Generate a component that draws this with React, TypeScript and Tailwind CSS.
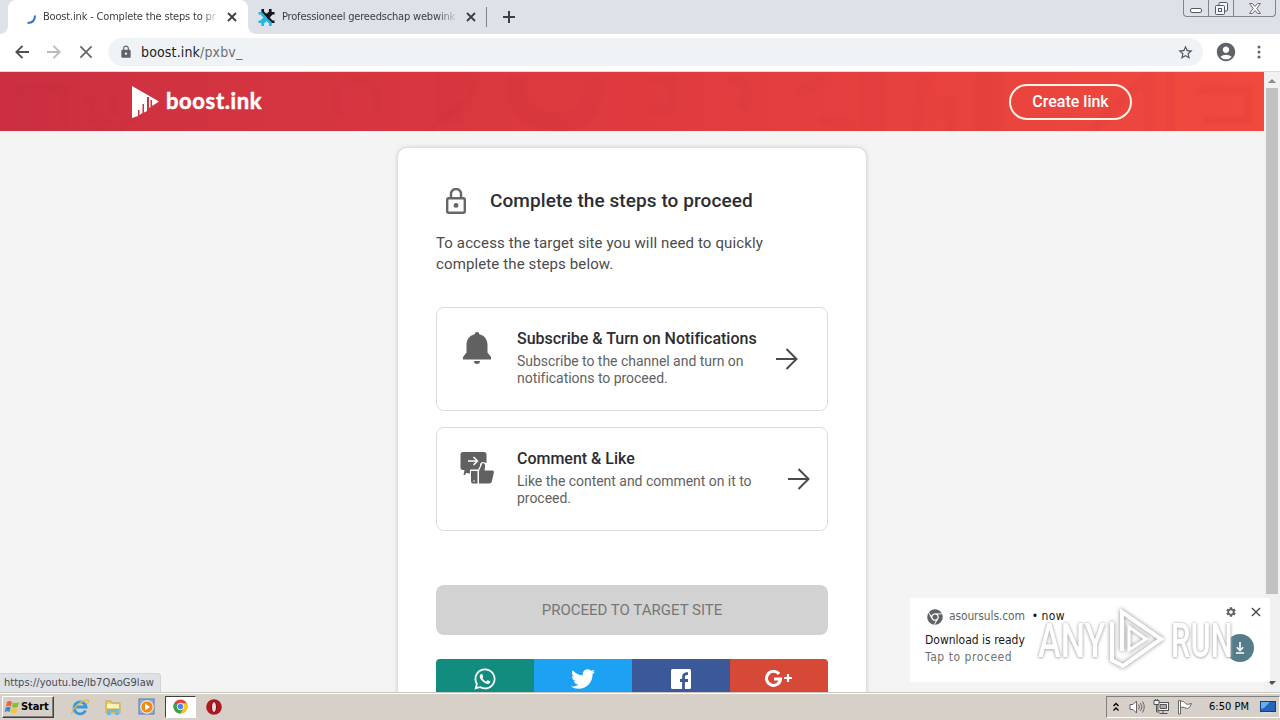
import React from "react";
import { FaChrome, FaTwitter, FaWhatsapp } from "react-icons/fa";
import { MdAccountCircle, MdLock, MdSettings, MdStarBorder } from "react-icons/md";

function Cross({ className, w = 1.8 }: { className: string; w?: number }) {
  return (
    <svg viewBox="0 0 10 10" className={className} stroke="currentColor" strokeWidth={w} fill="none">
      <path d="M1 1l8 8M9 1l-8 8" />
    </svg>
  );
}

function TabStrip() {
  return (
    <div className="flex h-[34px] shrink-0 bg-[#dee1e8] font-['DejaVu_Sans_Condensed','DejaVu_Sans',sans-serif] text-[11px] text-[#3a3d42]">
      <div className="flex w-2 items-end bg-white">
        <div className="h-full w-2 rounded-br-lg bg-[#dee1e8]" />
      </div>
      <div className="flex h-full w-[240px] items-center rounded-t-lg bg-white pl-[17px]">
        <svg viewBox="0 0 16 16" className="h-4 w-4 shrink-0" fill="none" stroke="#3b6fd0" strokeWidth="2">
          <path d="M10 4.500C10 9 7.500 12 2.500 12" transform="translate(0 2)" />
        </svg>
        <div className="ml-[2px] w-[176px] whitespace-nowrap tracking-[-0.18px] [mask-image:linear-gradient(to_right,black_90%,transparent)]">
          Boost.ink - Complete the steps to pr
        </div>
        <Cross className="ml-[8px] h-[10px] w-[10px] shrink-0" />
      </div>
      <div className="flex w-2 bg-white">
        <div className="h-full w-2 rounded-bl-lg bg-[#dee1e8]" />
      </div>
      <div className="flex h-full items-center pl-[2px]">
        <svg viewBox="0 0 18 18" className="h-[17px] w-[17px]" fill="none" strokeWidth="2.800">
          <path d="M5 0v3.500l4 3.500 4-3.500V0" stroke="#15161b" />
          <path d="M17.500 4.500h-3L10.500 9l4 4.500h3" stroke="#15161b" />
          <path d="M.5 4.500h3L7.500 9l-4 4.500h-3M5 18v-3.500L9 11l4 3.500V18" stroke="#25b5df" />
        </svg>
        <div className="ml-[7px] w-[176px] whitespace-nowrap tracking-[-0.18px] [mask-image:linear-gradient(to_right,black_88%,transparent)]">
          Professioneel gereedschap webwink
        </div>
        <Cross className="ml-[8px] h-[10px] w-[10px]" />
        <div className="ml-[10px] h-5 w-px bg-[#80848a]" />
        <svg viewBox="0 0 12 12" className="ml-[16px] h-3 w-3" stroke="#3c4043" strokeWidth="2">
          <path d="M6 0v12M0 6h12" />
        </svg>
      </div>
      <div className="mr-1 ml-auto flex h-[17px] w-[93px] rounded-b-[4px] border border-t-0 border-[#80848f]">
        <div className="flex w-[25px] items-end justify-center border-r border-[#80848f] pb-[3px]">
          <div className="h-[5px] w-3 rounded-[2px] border border-[#555962] bg-white" />
        </div>
        <div className="flex w-[25px] items-center justify-center border-r border-[#80848f]">
          <svg viewBox="0 0 13 13" className="h-[13px] w-[13px]" fill="#f4f5f7" stroke="#555962">
            <rect x="4" y=".5" width="8.500" height="8.500" rx="1" />
            <rect x=".5" y="3.500" width="9" height="9" rx="1" />
            <rect x="3.500" y="6.500" width="3" height="3" />
          </svg>
        </div>
        <div className="flex flex-1 items-center justify-center">
          <svg viewBox="0 0 12 11" className="h-[11px] w-3" fill="#fff" stroke="#686c75">
            <path d="M.5.500h3L6 3.500 8.500.500h3L7.800 5.500l3.700 5h-3L6 7.500l-2.500 3h-3l3.700-5z" />
          </svg>
        </div>
      </div>
    </div>
  );
}

function NavArrow({ className }: { className: string }) {
  return (
    <svg viewBox="0 0 14 14" className={className} fill="none" stroke="currentColor" strokeWidth="1.800">
      <path d="M14 7H1.500M7.500 .8L1.300 7l6.200 6.200" />
    </svg>
  );
}

function Toolbar() {
  return (
    <div className="flex h-[38px] shrink-0 items-center border-b border-[#dcdcdc] bg-white pb-px text-[#5f6368]">
      <NavArrow className="ml-[15px] h-[14px] w-[14px] text-[#4c5055]" />
      <NavArrow className="ml-[18px] h-[14px] w-[14px] rotate-180 text-[#b9bbbe]" />
      <Cross className="ml-[18px] h-[14px] w-[14px]" w={1.2} />
      <div className="ml-[15px] flex h-7 w-[1095px] items-center rounded-full bg-[#f0f3f6] pr-[9px] pl-[11px]">
        <MdLock className="h-[14px] w-[14px]" />
        <div className="ml-2 font-['DejaVu_Sans_Condensed','DejaVu_Sans',sans-serif] text-[14px] tracking-[0.15px] text-[#6a6e73]">
          <span className="text-[#202124]">boost.ink</span>/pxbv_
        </div>
        <MdStarBorder className="ml-auto h-[17px] w-[17px] text-[#50545a]" />
      </div>
      <MdAccountCircle className="ml-[12px] h-[22px] w-[22px]" />
      <svg viewBox="0 0 4 14" className="ml-[20px] h-[14px] w-1" fill="#5f6368">
        <circle cx="2" cy="2" r="1.500" />
        <circle cx="2" cy="7" r="1.500" />
        <circle cx="2" cy="12" r="1.500" />
      </svg>
    </div>
  );
}

function Header() {
  return (
    <div className="relative flex h-[59px] shrink-0 items-center bg-linear-to-r from-[#cb2f40] via-[#df3b3f] to-[#f0493e]">
      <svg viewBox="0 0 1264 59" className="absolute inset-0 h-full w-full blur-[1px]" fill="none" stroke="#a32435" strokeOpacity=".06">
        <path d="M15 15h55M22 15v38M43 15v38M65 15v38" strokeWidth="5" strokeOpacity=".04" />
        <path d="M86 30l6-4v14m10 0v3m16-17h-5v14h7M88 50h26m-13 0v9m34-9h-14v9" strokeWidth="4" />
        <path d="M340 42c-8-16-4-32 16-33s25 14 20 31M430 59c14-22 40-17 48-59" strokeWidth="6" />
        <path d="M436 5h36M450 5v45" strokeWidth="24" />
        <path d="M517 5c-8 25 12 43 38 45s43-16 37-43" strokeWidth="18" />
        <path d="M650 8h22v30h-22M730 12c14-10 24 5 12 25M800 23c9-12 19-6 22-19M820 48l35 5" strokeWidth="9" />
        <path d="M872 0v59M988 0v59" strokeWidth="25" />
        <path d="M924 5l-8 54M948 25l4 34" strokeWidth="10" />
        <path d="M1090 59l58-56v56M1170 0v59M1198 18h50v30h-44" strokeWidth="8" />
      </svg>
      <svg viewBox="0 0 27 32" className="relative ml-[132px] h-8 w-[27px]" fill="#fff">
        <path d="M0 0L27 15.500 20 20v-6h-1.500v7L17 22V11h-2v14l-3 1.500V18h-1.500v9L7.500 29v-5H6v6L0 32z" />
      </svg>
      <div className="relative ml-[7px] pb-[2px] font-[Lato,sans-serif] text-[22px] leading-[30px] font-bold tracking-[0.62px] text-white [-webkit-text-stroke:0.5px_#fff]">
        boost.ink
      </div>
      <div className="relative mr-[132px] ml-auto flex h-9 w-[123px] items-center justify-center rounded-full border-2 border-[#fff4e6] text-[16px] font-medium text-white">
        Create link
      </div>
    </div>
  );
}

function StepArrow() {
  return (
    <svg viewBox="0 0 22 22" className="h-[22px] w-[22px] shrink-0" fill="none" stroke="#4a4a4a" strokeWidth="2">
      <path d="M0 11h20.500M10.500 1l10 10-10 10" />
    </svg>
  );
}

function Step({ icon, title, text, textClass }: { icon: React.ReactNode; title: string; text: string; textClass: string }) {
  return (
    <div className="flex h-[104px] rounded-lg border border-[#dcdcdc] pt-[21px] pl-[20px]">
      <div className="-mt-px flex h-10 w-10 items-center justify-center">{icon}</div>
      <div className={textClass}>
        <div className="text-[16px] leading-5 font-medium tracking-[-0.01px] whitespace-nowrap text-[#2c2c32]">{title}</div>
        <div className="mt-1 text-[14px] leading-[17px] tracking-[-0.03px] text-[#626262]">{text}</div>
      </div>
      <div className="pt-[19px]">
        <StepArrow />
      </div>
    </div>
  );
}

function CommentLike() {
  return (
    <svg viewBox="0 0 34 34" className="h-[34px] w-[34px]" fill="#616161">
      <path d="M3 1h21a2.500 2.500 0 0 1 2.500 2.500V12L23 11c-2 0-3 1-3 4l-2 3.500h-8v4L6 22l-1 2H3.500l1-5H3a2.500 2.500 0 0 1-2.500-2.500v-13A2.500 2.500 0 0 1 3 1z" />
      <path d="M8 10h9M13.500 6l4 4-4 4" fill="none" stroke="#fff" strokeWidth="1.500" />
      <path d="M11 20h6.500v12.500H13A2 2 0 0 1 11 30.500zM19 20l3.500-8c2 0 3 1.500 2.500 4l-.5 3.500h7.500a1.800 1.800 0 0 1 1.800 2.200l-2 9a2.500 2.500 0 0 1-2.400 1.800H19z" />
      <circle cx="14" cy="30" r=".8" fill="#fff" />
    </svg>
  );
}

function Card() {
  return (
    <div className="mx-auto mt-4 flex h-[600px] w-[470px] shrink-0 flex-col rounded-[10px] border border-[#dedede] bg-white px-[38px] pt-[35px] shadow-[0_0_4px_#d4d4d4]">
      <div className="flex h-[36px] items-center">
        <svg viewBox="0 0 20 26" className="-mt-px ml-[10px] h-[26px] w-5" fill="none" stroke="#666" strokeWidth="2.400">
          <rect x="1.200" y="10.200" width="17.600" height="14.500" rx="1.500" />
          <path d="M5 10V6a5 5 0 0 1 10 0v4" />
          <circle cx="10" cy="17.400" r="2.400" fill="#666" stroke="none" />
        </svg>
        <div className="ml-[24px] text-[19px] font-medium tracking-[0.08px] whitespace-nowrap text-[#2c2c32]">Complete the steps to proceed</div>
      </div>
      <div className="mt-[14px] text-[15px] leading-[21px] tracking-[0.12px] text-[#4b4b4b]">
        To access the target site you will need to quickly
        <br />
        complete the steps below.
      </div>
      <div className="mt-8 flex flex-col gap-4">
        <Step
          icon={
            <svg viewBox="0 0 28 32" className="h-8 w-7" fill="#616161">
              <path d="M14 0a2.400 2.400 0 0 1 2.400 2.200C22 3.500 24.500 8 24.500 13v7.500L28 25v2.500H0V25l3.500-4.500V13C3.500 8 6 3.500 11.600 2.200A2.400 2.400 0 0 1 14 0zM11 29h6a3 3 0 0 1-6 0z" />
            </svg>
          }
          title="Subscribe & Turn on Notifications"
          text="Subscribe to the channel and turn on notifications to proceed."
          textClass="mr-[19px] ml-5 w-[240px]"
        />
        <Step icon={<CommentLike />} title="Comment & Like" text="Like the content and comment on it to proceed." textClass="mr-[16px] ml-5 w-[255px]" />
      </div>
      <div className="mt-[54px] flex h-[50px] shrink-0 items-center justify-center rounded-lg bg-[#d2d2d2] text-[15px] text-[#777]">PROCEED TO TARGET SITE</div>
      <div className="mt-6 grid h-10 shrink-0 grid-cols-4 overflow-hidden rounded-t text-white">
        <div className="flex items-center justify-center bg-[#128c7e]">
          <FaWhatsapp className="h-6 w-6" />
        </div>
        <div className="flex items-center justify-center bg-[#1da1f2]">
          <FaTwitter className="h-6 w-6" />
        </div>
        <div className="flex items-center justify-center bg-[#3b5998]">
          <svg viewBox="0 0 20 20" className="h-5 w-5">
            <rect width="20" height="20" rx="1.500" fill="#fff" />
            <path d="M12.500 20v-7.500M9 11.500h8M12.500 13V8c0-2.500 1.500-3.500 4.500-3.300" fill="none" stroke="#3b5998" strokeWidth="2.800" />
          </svg>
        </div>
        <div className="flex items-center justify-center bg-[#d64937]">
          <svg viewBox="0 0 28 18" className="h-[18px] w-7" fill="none" stroke="#fff">
            <path d="M14 4A7 7 0 1 0 15.500 9H9" strokeWidth="3" />
            <path d="M23 4v8M19 8h8" strokeWidth="2.200" />
          </svg>
        </div>
      </div>
    </div>
  );
}

function Notification() {
  return (
    <div className="absolute top-[526px] left-[910px] flex h-[84px] w-[360px] flex-col bg-white font-['DejaVu_Sans_Condensed','DejaVu_Sans',sans-serif] text-[12px] text-[#171717]">
      <div className="flex h-7 items-end pl-[17px]">
        <FaChrome className="mb-[1px] h-4 w-4 text-[#5f6368]" />
        <div className="ml-[6px] leading-[20px] tracking-[-0.15px] whitespace-nowrap text-[#666]">asoursuls.com</div>
        <div className="ml-[7px] leading-[20px] whitespace-nowrap">
          • <span className="tracking-[0.4px]">now</span>
        </div>
        <MdSettings className="mb-[8px] ml-auto h-3 w-3 text-[#5f6368]" />
        <Cross className="mr-[9px] mb-[9px] ml-[14px] h-[10px] w-[10px] text-[#45494e]" w={1.4} />
      </div>
      <div className="mt-[6px] flex pl-[15px]">
        <div className="leading-[17px] whitespace-nowrap">
          Download is ready
          <br />
          <span className="tracking-[0.55px] text-[#707070]">Tap to proceed</span>
        </div>
        <svg viewBox="0 0 28 28" className="mt-[2px] mr-4 ml-auto h-7 w-7">
          <circle cx="14" cy="14" r="14" fill="#557c8b" />
          <path d="M14 8v8M10.800 13.300L14 16.500l3.200-3.200M10 19h8" fill="none" stroke="#fff" strokeWidth="1.600" />
        </svg>
      </div>
      <div className="absolute top-[8px] left-[128px] flex h-[68px] w-[200px] items-center font-[Roboto,sans-serif] text-[49px] leading-[30px] text-white [text-shadow:0_0_3px_#aaa,0_1px_4px_#bbb]">
        <div className="w-[67px] pt-[2px]">
          <div className="w-fit origin-left scale-x-[0.7] font-medium">ANY</div>
        </div>
        <svg viewBox="0 0 60 66" className="h-[66px] w-[60px] shrink-0 drop-shadow-[0_0_2px_#888]" fill="none" stroke="#fff" strokeWidth="4">
          <path d="M17 44V5l39 27-38 27-11-6V15" />
          <path d="M24 20v23l17-11z" strokeWidth="3" />
        </svg>
        <div className="ml-[6px] w-[62px] pt-[2px]">
          <div className="w-fit origin-left scale-x-[0.63] font-medium">RUN</div>
        </div>
      </div>
    </div>
  );
}

function Page() {
  return (
    <div className="relative flex h-[620px] shrink-0 overflow-hidden bg-[#f4f4f4] font-[Roboto,sans-serif]">
      <div className="flex w-[1264px] flex-col">
        <Header />
        <Card />
      </div>
      <div className="flex w-4 flex-col items-center bg-[#f1f1f1]">
        <svg viewBox="0 0 16 16" className="h-4 w-4" fill="#8a8a8a">
          <path d="M4 11l4-4 4 4z" />
        </svg>
        <div className="h-[506px] w-3 bg-[#c1c1c1]" />
        <svg viewBox="0 0 16 16" className="mt-auto h-4 w-4" fill="#505050">
          <path d="M4 5h8l-4 4z" />
        </svg>
      </div>
      <Notification />
      <div className="absolute bottom-0 left-0 flex h-[19px] w-[161px] items-center rounded-tr border-t border-r border-[#d0d3d9] bg-[#dee1e6] pt-px pl-1 font-['DejaVu_Sans_Condensed','DejaVu_Sans',sans-serif] text-[11px] tracking-[0.02px] whitespace-nowrap text-[#484c51]">
        https://youtu.be/lb7QAoG9law
      </div>
    </div>
  );
}

function Taskbar() {
  return (
    <div className="flex h-7 shrink-0 items-center border-t border-[#c9c6c0] bg-[#d6d0c8] font-['DejaVu_Sans_Condensed','DejaVu_Sans',sans-serif] text-[11px] text-black shadow-[inset_0_1px_#fff]">
      <div className="ml-[2px] flex h-[22px] w-[52px] items-center border border-t-white border-r-[#404040] border-b-[#404040] border-l-white pl-px shadow-[inset_-1px_-1px_#808080]">
        <svg viewBox="0 0 16 16" className="h-4 w-4 shrink-0">
          <path d="M3 3c2-1.500 3.500-1 5 0L7 7.500c-1.500-1-3-1-5 0z" fill="#ef6430" />
          <path d="M9 3.200c2 1.200 4 1 6 0L13.800 8c-2 1-4 1-5.800 0z" fill="#86be3c" />
          <path d="M1.700 8.500c2-1 3.500-1 5 0L5.500 13c-1.500-1-3-1-5 0z" fill="#3d8cd8" />
          <path d="M7.700 9c2 1 4 1 5.800 0l-1.200 4.500c-2 1-4 1-5.800 0z" fill="#f9c332" />
        </svg>
        <span className="ml-px pt-[2px] font-bold tracking-[-0.1px]">Start</span>
      </div>
      <svg viewBox="0 0 18 18" className="ml-[17px] h-[18px] w-[18px]" fill="none">
        <path d="M14.500 12.500A6 6 0 1 1 15 9H5" stroke="#3699db" strokeWidth="2.800" />
        <path d="M1 16C0 11 12 1 17 2c1 1 0 3-1 4" stroke="#e5b83e" strokeWidth="1.300" />
      </svg>
      <svg viewBox="0 0 18 18" className="ml-[15px] h-[18px] w-[18px]">
        <path d="M2 3h5l1 2h8v10H2z" fill="#edce69" stroke="#c9a746" />
        <path d="M3 6h12v4H3z" fill="#fff2b5" />
        <path d="M3 17v-6h12v6h-4v-3H7v3z" fill="#73b7df" />
      </svg>
      <svg viewBox="0 0 18 18" className="ml-[16px] h-[18px] w-[18px]">
        <rect x="1" y="1" width="15" height="15" fill="#8fb4d6" stroke="#4f7fae" />
        <circle cx="9" cy="9" r="6.200" fill="#f28a1c" stroke="#fff" />
        <path d="M7 5.500l5 3.500-5 3.500z" fill="#fff" />
      </svg>
      <div className="ml-[9px] flex h-[22px] w-[31px] items-center justify-center border border-t-[#404040] border-r-white border-b-white border-l-[#404040] bg-white">
        <svg viewBox="0 0 16 16" className="h-[15px] w-[15px]">
          <circle cx="8" cy="8" r="7.500" fill="#e54435" />
          <path d="M8 8L1.500 4.250A7.500 7.500 0 0 0 8 15.500l3.200-5.700z" fill="#34a34e" />
          <path d="M8 4.500h6.600A7.500 7.500 0 0 1 8 15.500l3.200-5.700z" fill="#fbc817" />
          <circle cx="8" cy="8" r="3.500" fill="#4787ef" stroke="#fff" />
        </svg>
      </div>
      <svg viewBox="0 0 16 16" className="ml-[10px] h-4 w-4">
        <circle cx="8" cy="8" r="7.800" fill="#af1821" />
        <ellipse cx="8" cy="8" rx="2.500" ry="5.500" fill="#e5dcda" stroke="#7b080e" />
      </svg>
      <div className="ml-auto flex h-[22px] w-[174px] items-center border border-t-[#808080] border-r-white border-b-white border-l-[#808080] pl-[5px]">
        <svg viewBox="0 0 8 10" className="h-[10px] w-2" fill="none" stroke="#000" strokeWidth="1.400">
          <path d="M1.500 4L4 1.500 6.500 4M1.500 8.500L4 6l2.500 2.500" />
        </svg>
        <svg viewBox="0 0 16 16" className="ml-[9px] h-4 w-4" fill="#fff" stroke="#666">
          <path d="M1 5.500h3L7.500 2v12L4 10.500H1z" />
          <path d="M9.500 5.500q2 2.500 0 5M11.500 4q3 4 0 8M13.500 2.500q3.500 5.500 0 11" fill="none" />
        </svg>
        <svg viewBox="0 0 16 16" className="ml-[8px] h-4 w-4" fill="#f4f4f4" stroke="#555">
          <rect x="5" y="3.500" width="10.500" height="8" />
          <path d="M7 5.500h6.500v4H7z" fill="#aaa" />
          <path d="M10 12v2M6.500 14.500h8M3.500 6v7h3" fill="none" />
          <path d="M1 1.500h5v4H1zM2.500 0v2M4.500 0v2" />
        </svg>
        <svg viewBox="0 0 16 16" className="ml-[8px] h-4 w-4" fill="#fff" stroke="#666">
          <path d="M1.500 1.500h2V15h-2zM3.500 2.500c3-1 4 1 5 2s3 1 6 0c-1 2-2 5-4 5s-3-2-7-1z" />
        </svg>
        <div className="ml-[16px] w-[42px] pt-[2px] tracking-[0.02px] whitespace-nowrap">6:50 PM</div>
        <svg viewBox="0 0 16 14" className="ml-[9px] h-[14px] w-4 shrink-0">
          <rect x=".5" y="1.500" width="15" height="10" fill="#2365bd" stroke="#153d79" />
          <path d="M1 2h9L4 8 1 9z" fill="#68adf0" />
          <path d="M3 13h9" stroke="#d9e5f4" />
        </svg>
      </div>
    </div>
  );
}

export default function App() {
  return (
    <div className="flex h-[720px] w-[1280px] flex-col overflow-hidden">
      <TabStrip />
      <Toolbar />
      <Page />
      <Taskbar />
    </div>
  );
}
